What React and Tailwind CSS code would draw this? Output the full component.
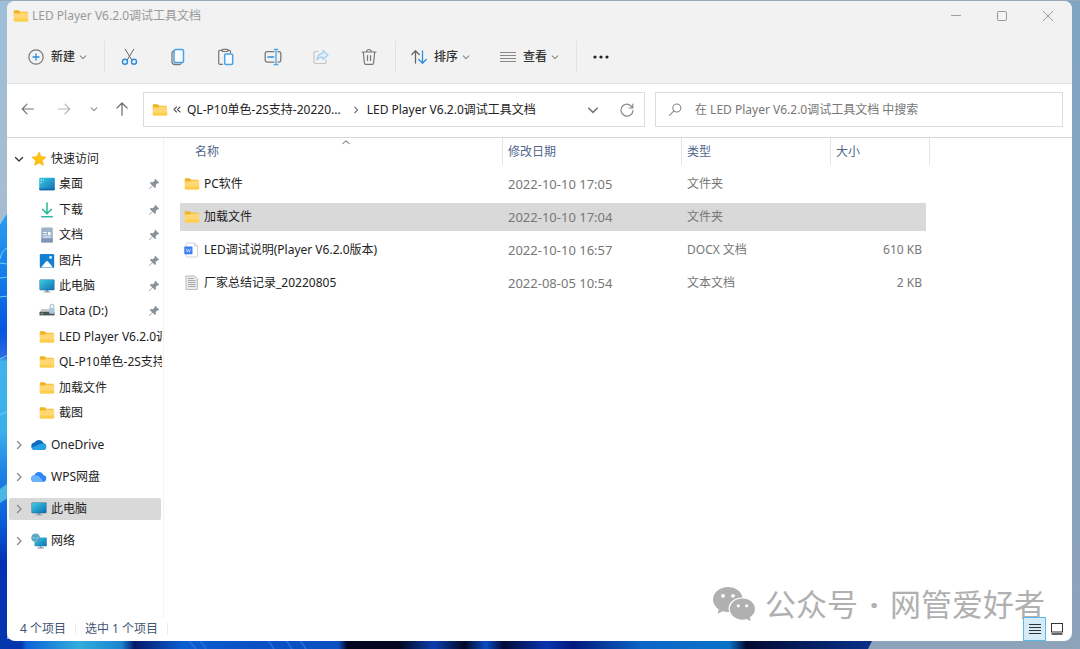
import React from "react";

const stroke = { fill: "none", strokeLinecap: "round", strokeLinejoin: "round" };

function Folder() {
  return (
    <svg viewBox="0 0 16 16" className="h-4 w-4 shrink-0">
      <path d="M.8 3a.8.8 0 0 1 .8-.8h4l1.6 1.6H14a.8.8 0 0 1 .8.8V8H.8Z" fill="#f0b323" />
      <path d="M.8 5.600h5.400l1.200-1.100H14.400a.8.8 0 0 1 .8.8v7.500a.8.8 0 0 1-.8.8H1.600a.8.8 0 0 1-.8-.8Z" fill="#ffd873" />
      <path d="M.8 10.500h14.400v2.300a.8.8 0 0 1-.8.8H1.600a.8.8 0 0 1-.8-.8Z" fill="#fdcd4c" />
    </svg>
  );
}

function Chevron({ dir = "down", className }) {
  const d = { down: "M1.500 3.500 5 7 8.500 3.500", right: "M3.500 1.500 7 5 3.500 8.500", up: "M1 7 5 3.500 9 7" }[dir];
  return (
    <svg viewBox="0 0 10 10" className={className} {...stroke} stroke="currentColor" strokeWidth="1.300">
      <path d={d} />
    </svg>
  );
}

function Monitor() {
  return (
    <svg viewBox="0 0 16 16" className="h-4 w-4 shrink-0">
      <defs>
        <linearGradient id="mon" x1="0" y1="0" x2="1" y2="1">
          <stop offset="0" stopColor="#3ccbe0" />
          <stop offset="1" stopColor="#0f6fb4" />
        </linearGradient>
      </defs>
      <path d="M6.500 11.500h3V14h-3z" fill="#8b98a2" />
      <path d="M4.500 13.500h7v1h-7z" fill="#9aa5ad" />
      <rect x=".5" y="1.500" width="15" height="10.800" rx=".8" fill="#1e6b94" />
      <rect x="1" y="2" width="14" height="9.800" rx=".4" fill="url(#mon)" />
    </svg>
  );
}

function Star() {
  return (
    <svg viewBox="0 0 16 16" className="h-4 w-4 shrink-0">
      <path
        d="M8 1.200 10 5.700l4.900.5-3.700 3.300 1.100 4.800L8 11.800l-4.300 2.500 1.100-4.800L1.100 6.200 6 5.700Z"
        fill="#ffc20e"
        stroke="#f9b406"
        strokeWidth=".8"
        strokeLinejoin="round"
      />
    </svg>
  );
}

function Desktop() {
  return (
    <svg viewBox="0 0 16 16" className="h-4 w-4 shrink-0">
      <rect x=".2" y="1.800" width="15.600" height="12.400" rx="1" fill="url(#mon)" />
      <path d="M1.600 3.500h1.200v1.200H1.600zM1.600 6h1.200v1.200H1.600zM4 3.500h1v1.200H4z" fill="#b8f0f6" />
      <path d="M.2 12.800h15.600v.5a1 1 0 0 1-1 1H1.200a1 1 0 0 1-1-1Z" fill="#1565a8" />
    </svg>
  );
}

function Download() {
  return (
    <svg viewBox="0 0 16 16" className="h-4 w-4 shrink-0" {...stroke} strokeWidth="1.500">
      <path d="M8 .9v10.300M3.500 7.200 8 11.600l4.500-4.400" stroke="#2bb894" />
      <path d="M2.600 14.800h10.800" stroke="#33b7a0" />
    </svg>
  );
}

function Documents() {
  return (
    <svg viewBox="0 0 16 16" className="h-4 w-4 shrink-0">
      <rect x="2.200" y=".6" width="11.600" height="15" rx="1.200" fill="#9db3ca" />
      <path d="M2.200 11.500h11.600v2.900a1.200 1.200 0 0 1-1.200 1.200H3.400a1.200 1.200 0 0 1-1.200-1.200Z" fill="#7d97b5" />
      <path d="M4.300 5h3.500v1H4.300zM4.300 7.200h3.500v1H4.300zM4.300 9.400h7.400v1H4.300zM9 5h2.700v3.200H9z" fill="#f1f6fb" />
    </svg>
  );
}

function Pictures() {
  return (
    <svg viewBox="0 0 16 16" className="h-4 w-4 shrink-0">
      <rect x=".8" y="1" width="14.400" height="14" rx="1.200" fill="#1381d3" />
      <path d="m2 14.500 4.800-5.700a1.600 1.600 0 0 1 2.400 0l4.800 5.700Z" fill="#fff" />
      <circle cx="11.600" cy="4.400" r="1.300" fill="#fff" />
    </svg>
  );
}

function Drive() {
  return (
    <svg viewBox="0 0 16 16" className="h-4 w-4 shrink-0">
      <path d="M2.500 6h10l3 3.600H.5Z" fill="#c4cacf" />
      <path d="M.5 8.800h15v3.600H.5z" fill="#4a5258" />
      <path d="M2 10.200h2.200v1H2z" fill="#5fd37a" />
      <path d="M11.200 5V3a1.800 1.800 0 0 1 3.600 0v1.500" fill="none" stroke="#9fb4c4" strokeWidth="1" />
      <rect x="10.200" y="4.700" width="5.400" height="6" rx=".6" fill="#a9c9de" />
    </svg>
  );
}

function OneDrive() {
  return (
    <svg viewBox="0 0 16 16" className="h-4 w-4 shrink-0">
      <path d="M3.800 13A3.800 3.800 0 0 1 3.300 5.500 5.200 5.200 0 0 1 12.600 6.200 3.500 3.500 0 0 1 12.800 13Z" fill="#0f6cbd" />
      <path d="M.4 10.800 8.200 7.200l4.200-1A3.500 3.500 0 0 1 12.700 13H3.800A3.700 3.700 0 0 1 .4 10.800Z" fill="#23a3e6" />
    </svg>
  );
}

function WpsCloud() {
  return (
    <svg viewBox="0 0 16 16" className="h-4 w-4 shrink-0">
      <path d="M3.600 12.900A3.300 3.300 0 0 1 3.400 6.300 4.700 4.700 0 0 1 12.300 6 3.500 3.500 0 0 1 12.400 12.900Z" fill="#2f86f6" />
      <path d="M3.700 12.900A3.300 3.300 0 0 1 3.900 6.300c1.700 0 3 1.100 4 2.500l3 4.100Z" fill="#69b2ff" />
      <path d="M6.300 7.100c1 .3 4.200 3.400 5 5.800" fill="none" stroke="#cfe6ff" strokeWidth=".7" />
    </svg>
  );
}

function Network() {
  return (
    <svg viewBox="0 0 16 16" className="h-4 w-4 shrink-0">
      <rect x="3.500" y="4.500" width="12.300" height="8.800" rx=".7" fill="url(#mon)" />
      <path d="M8.500 13.300h2.400v1.400H8.500zM6.500 14.500H13v.9H6.500z" fill="#8b98a2" />
      <circle cx="4.600" cy="4.800" r="4.300" fill="#4a9cc0" />
      <path d="M.6 4.800h8M4.600.6c-2.400 2.500-2.400 6 0 8.400M4.600.6C7 3.100 7 6.600 4.600 9" fill="none" stroke="#a9d8ea" strokeWidth=".6" />
    </svg>
  );
}

function Pin() {
  return (
    <svg viewBox="0 0 12 12" className="h-3 w-3 shrink-0">
      <path d="M7.300.8 11.200 4.700l-.9.700-.8-.1-1.700 1.800.1 2.200-.9.800L4.600 7.800 1.500 10.900.9 11.100l.2-.6 3.100-3.100L1.900 5l.8-.9 2.200.1 1.800-1.700-.1-.8Z" fill="#87929b" />
    </svg>
  );
}

function DocxFile() {
  return (
    <svg viewBox="0 0 16 16" className="h-4 w-4 shrink-0">
      <path d="M3 1h7.500L13.700 4v10.200a.8.8 0 0 1-.8.8H3a.8.8 0 0 1-.8-.8V1.800A.8.8 0 0 1 3 1Z" fill="#fff" stroke="#c9cdd2" strokeWidth=".9" />
      <path d="M10.500 1v3h3.200" fill="#e8eaed" stroke="#c9cdd2" strokeWidth=".8" />
      <rect x=".3" y="4.600" width="8.200" height="7.600" rx=".6" fill="#3b7cf0" />
      <path d="m2.200 6.600 1.100 3.600 1.100-3 1.100 3 1.100-3.600" fill="none" stroke="#d3e2ff" strokeWidth=".8" />
    </svg>
  );
}

function TextFile() {
  return (
    <svg viewBox="0 0 16 16" className="h-4 w-4 shrink-0">
      <path d="M2 1h8.800L13.400 3.600V14.500H2Z" fill="#ececeb" stroke="#b5b5b5" strokeWidth=".9" />
      <path d="M4 3.500h6M4 5.500h7.600M4 7.500h7.600M4 9.500h7.600M4 11.500h7.600" stroke="#999" strokeWidth=".8" />
    </svg>
  );
}

const quick = [
  ["桌面", Desktop, true],
  ["下载", Download, true],
  ["文档", Documents, true],
  ["图片", Pictures, true],
  ["此电脑", Monitor, true],
  ["Data (D:)", Drive, true],
  ["LED Player V6.2.0调试工具文档", Folder, false],
  ["QL-P10单色-2S支持-20220805", Folder, false],
  ["加载文件", Folder, false],
  ["截图", Folder, false],
];

const roots = [
  ["OneDrive", OneDrive, false],
  ["WPS网盘", WpsCloud, false],
  ["此电脑", Monitor, true],
  ["网络", Network, false],
];

const files = [
  ["PC软件", Folder, "2022-10-10 17:05", "文件夹", "", false],
  ["加载文件", Folder, "2022-10-10 17:04", "文件夹", "", true],
  ["LED调试说明(Player V6.2.0版本)", DocxFile, "2022-10-10 16:57", "DOCX 文档", "610 KB", false],
  ["厂家总结记录_20220805", TextFile, "2022-08-05 10:54", "文本文档", "2 KB", false],
];

function Wallpaper() {
  return (
    <svg viewBox="0 0 1080 649" preserveAspectRatio="none" className="absolute inset-0 h-full w-full" aria-hidden="true">
      <defs>
        <linearGradient id="sky" x1="0" y1="0" x2="0" y2="1">
          <stop offset="0" stopColor="#9dbfd8" />
          <stop offset=".35" stopColor="#a9bccf" />
          <stop offset="1" stopColor="#9db0c6" />
        </linearGradient>
        <linearGradient id="skyr" x1="0" y1="0" x2="0" y2="1">
          <stop offset="0" stopColor="#7fa5c3" />
          <stop offset="1" stopColor="#8ca3ba" />
        </linearGradient>
        <linearGradient id="left" x1="0" y1="0" x2="0" y2="1">
          <stop offset="0" stopColor="#2d9cf0" />
          <stop offset=".13" stopColor="#1581ea" />
          <stop offset=".27" stopColor="#0355e0" />
          <stop offset=".33" stopColor="#2a6be0" />
          <stop offset=".34" stopColor="#3fb4ea" />
          <stop offset=".5" stopColor="#3ab0ea" />
          <stop offset=".6" stopColor="#1c80e6" />
          <stop offset=".7" stopColor="#0a62da" />
          <stop offset=".8" stopColor="#0232b4" />
          <stop offset="1" stopColor="#0436ae" />
        </linearGradient>
        <linearGradient id="base" x1="0" y1="0" x2="868" y2="0" gradientUnits="userSpaceOnUse">
          <stop offset="0" stopColor="#0436ae" />
          <stop offset=".025" stopColor="#0436ae" />
          <stop offset=".03" stopColor="#0c62d8" />
          <stop offset=".09" stopColor="#32aedc" />
          <stop offset=".14" stopColor="#1d84d0" />
          <stop offset=".155" stopColor="#04186a" />
          <stop offset=".21" stopColor="#0a5fd0" />
          <stop offset=".3" stopColor="#0a4fc4" />
          <stop offset=".39" stopColor="#0b50c0" />
          <stop offset=".4" stopColor="#020620" />
          <stop offset=".46" stopColor="#020620" />
          <stop offset=".5" stopColor="#0a3fae" />
          <stop offset=".535" stopColor="#030824" />
          <stop offset=".56" stopColor="#0a4cc4" />
          <stop offset=".58" stopColor="#030a38" />
          <stop offset=".63" stopColor="#0836b0" />
          <stop offset=".66" stopColor="#04187c" />
          <stop offset=".74" stopColor="#0b66c6" />
          <stop offset=".84" stopColor="#0a72c8" />
          <stop offset=".86" stopColor="#020a30" />
          <stop offset=".95" stopColor="#06226c" />
          <stop offset="1" stopColor="#0a2f86" />
        </linearGradient>
      </defs>
      <rect width="540" height="649" fill="url(#sky)" />
      <rect x="540" width="540" height="649" fill="url(#skyr)" />
      <rect width="1080" height="1" fill="#98a8b8" />
      <path d="M0 224 7 213V649H0Z" fill="url(#left)" />
      <path d="M0 224 7 213M0 259Q2 250 7 248M0 263 7 264M0 278 8 277M0 297 8 296M0 359 8 355M0 415 8 411" fill="none" stroke="#6fd0fa" strokeWidth="1" />
      <path d="M0 489 8 483V498L0 503Z" fill="#4ab6e4" />
      <path d="M0 639H873L868 649H0Z" fill="url(#base)" />
      <path d="M188 640 196 649M200 640 206 649M268 640 274 649M286 640 292 649M300 640 306 649" stroke="#2368d8" strokeWidth="2" />
    </svg>
  );
}

function TitleBar() {
  const btn = "flex h-full w-[46px] items-center justify-center";
  return (
    <header className="flex h-[30px] items-center pr-px pl-1.5 text-[#999]">
      <Folder />
      <h1 className="ml-[3px] flex-1 whitespace-nowrap">LED Player V6.2.0调试工具文档</h1>
      <button aria-label="最小化" className={btn}>
        <svg viewBox="0 0 12 12" className="h-3 w-3" stroke="#a0a0a0"><path d="M1 5.500h10" /></svg>
      </button>
      <button aria-label="最大化" className={btn}>
        <svg viewBox="0 0 12 12" className="h-3 w-3" fill="none" stroke="#999"><rect x="1.500" y="1.500" width="9" height="9" rx=".8" /></svg>
      </button>
      <button aria-label="关闭" className={btn}>
        <svg viewBox="0 0 12 12" className="h-3 w-3" stroke="#999"><path d="m1 1 10 10M11 1 1 11" /></svg>
      </button>
    </header>
  );
}

const tools = [
  ["剪切", (
    <>
      <path d="M5.200 1.200 11.800 12M13.800 1.200 7.200 12" stroke="#666" />
      <circle cx="5" cy="13.700" r="2.500" stroke="#2a8de0" strokeWidth="1.400" />
      <circle cx="14" cy="13.700" r="2.500" stroke="#2a8de0" strokeWidth="1.400" />
    </>
  )],
  ["复制", (
    <>
      <path d="M5.500 3.200A2 2 0 0 0 4 5v8.500A3 3 0 0 0 7 16.500h4.500a2 2 0 0 0 1.700-1" stroke="#7a7a7a" strokeWidth="1.300" />
      <rect x="6" y="1.500" width="9.500" height="13" rx="1.800" stroke="#4aa3e6" strokeWidth="1.500" fill="#f7fbff" />
    </>
  )],
  ["粘贴", (
    <>
      <path d="M6.500 2.300H4a1.300 1.300 0 0 0-1.300 1.300V15A1.300 1.300 0 0 0 4 16.300h2.500M12 2.300h1.200a1.300 1.300 0 0 1 1.300 1.300V4.500" stroke="#777" strokeWidth="1.200" />
      <rect x="6" y="1.300" width="6" height="2.200" rx="1" stroke="#777" strokeWidth="1.200" />
      <rect x="8.700" y="6" width="8" height="10.500" rx="1.200" stroke="#4aa3e6" strokeWidth="1.500" fill="#f7fbff" />
    </>
  )],
  ["重命名", (
    <>
      <path d="M10 3.700H3A1.800 1.800 0 0 0 1.200 5.500v6.800A1.800 1.800 0 0 0 3 14.100h7M14 3.700h1a1.800 1.800 0 0 1 1.800 1.800v6.800A1.800 1.800 0 0 1 15 14.100h-1" stroke="#777" strokeWidth="1.300" />
      <path d="M4 9h5.500" stroke="#2a8de0" strokeWidth="1.600" />
      <path d="M12 1.500v15M10.200 1.300h3.600M10.200 16.700h3.600" stroke="#4aa3e6" strokeWidth="1.300" />
    </>
  )],
  ["共享", (
    <>
      <path d="M6 3.500H3.500A1.500 1.500 0 0 0 2 5v9a1.500 1.500 0 0 0 1.500 1.500h9A1.500 1.500 0 0 0 14 14v-2" stroke="#c4c4c4" strokeWidth="1.200" />
      <path d="M11 2.500 16 7l-5 4.500V9.200C8 9 6.300 10 5 12c.2-4 2.200-6.400 6-6.900Z" stroke="#a5cdee" strokeWidth="1.200" fill="#e3effa" />
    </>
  )],
  ["删除", (
    <>
      <path d="M2 4h14M3.300 4l1.100 11a1.500 1.500 0 0 0 1.500 1.400h6.200a1.500 1.500 0 0 0 1.500-1.400L14.700 4M6.700 3.800a2.300 2.300 0 0 1 4.600 0M7.500 7.500v5M10.500 7.500v5" stroke="#777" strokeWidth="1.200" />
    </>
  )],
];

function Toolbar() {
  const btn = "flex h-8 items-center px-[15px] font-medium text-[#333]";
  const sep = "ml-0.5 h-8 w-px bg-[#e2e2e2]";
  return (
    <div role="toolbar" className="flex h-[53px] items-center border-b border-[#e3e3e3] pl-1.5">
      <button className={btn}>
        <svg viewBox="0 0 16 16" className="mr-[7px] h-4 w-4" {...stroke}>
          <circle cx="8" cy="8" r="7.200" stroke="#777" strokeWidth="1.200" />
          <path d="M8 5v6M5 8h6" stroke="#2a8de0" strokeWidth="1.300" />
        </svg>
        新建
        <Chevron className="ml-1 h-2 w-2 text-[#888]" />
      </button>
      <span className={sep} />
      {tools.map(([label, art]) => (
        <button key={label} aria-label={label} className="flex h-8 w-12 items-center justify-center">
          <svg viewBox="0 0 18 18" className="h-[18px] w-[18px]" {...stroke}>{art}</svg>
        </button>
      ))}
      <span className={sep} />
      <button className={btn}>
        <svg viewBox="0 0 16 16" className="mr-[7px] h-4 w-4" {...stroke} strokeWidth="1.300">
          <path d="M4.500 14V2M.8 5.500 4.500 1.800l3.700 3.700" stroke="#666" />
          <path d="M11.500 2v12M7.800 10.500l3.700 3.700 3.700-3.700" stroke="#2a8de0" />
        </svg>
        排序
        <Chevron className="ml-1 h-2 w-2 text-[#888]" />
      </button>
      <button className={btn}>
        <svg viewBox="0 0 16 16" className="mr-[7px] h-4 w-4" stroke="#8a8a8a">
          <path d="M0 3.500h16M0 6.500h16M0 9.500h16M0 12.500h16" />
        </svg>
        查看
        <Chevron className="ml-1 h-2 w-2 text-[#888]" />
      </button>
      <span className={sep} />
      <button aria-label="更多" className="flex h-8 w-12 items-center justify-center">
        <svg viewBox="0 0 18 4" className="h-1 w-[18px]" fill="#222">
          <circle cx="3" cy="2" r="1.600" />
          <circle cx="9" cy="2" r="1.600" />
          <circle cx="15" cy="2" r="1.600" />
        </svg>
      </button>
    </div>
  );
}

function AddressRow() {
  const nav = "flex h-[34px] shrink-0 items-center justify-center";
  return (
    <div className="flex h-[54px] items-start border-b border-[#d6d6d6] pt-2 pr-[9px] pl-0.5">
      <button aria-label="后退" className={`${nav} w-[37px] text-[#777]`}>
        <svg viewBox="0 0 14 14" className="h-3.5 w-3.5" {...stroke} stroke="currentColor" strokeWidth="1.200"><path d="M12.500 7h-11M6 2.200 1.300 7 6 11.800" /></svg>
      </button>
      <button aria-label="前进" className={`${nav} w-[37px] text-[#b5b5b5]`}>
        <svg viewBox="0 0 14 14" className="h-3.5 w-3.5" {...stroke} stroke="currentColor" strokeWidth="1.200"><path d="M.5 7h11M7 2.200 11.700 7 7 11.800" /></svg>
      </button>
      <button aria-label="最近的位置" className={`${nav} w-[21px] text-[#888]`}>
        <Chevron className="h-2 w-2" />
      </button>
      <button aria-label="上移" className={`${nav} mr-[3px] w-9 text-[#666]`}>
        <svg viewBox="0 0 14 14" className="h-3.5 w-3.5" {...stroke} stroke="currentColor" strokeWidth="1.200"><path d="M7 13.200V1M1.800 6.200 7 1l5.200 5.200" /></svg>
      </button>
      <nav aria-label="地址" className="flex h-[35px] min-w-0 flex-1 items-center border border-[#dcdcdc] pl-2 whitespace-nowrap text-[#222]">
        <Folder />
        <svg viewBox="0 0 8 8" className="mr-1.5 ml-[5px] h-2 w-2 shrink-0" {...stroke} stroke="#555" strokeWidth="1.100">
          <path d="M3.500 1 1 3.500 3.500 6M7 1 4.500 3.500 7 6" />
        </svg>
        <a href="#parent">QL-P10单色-2S支持-20220...</a>
        <Chevron dir="right" className="mr-[7px] ml-[11px] h-2 w-2 shrink-0 text-[#555]" />
        <a href="#current" className="min-w-0 flex-1 overflow-hidden">LED Player V6.2.0调试工具文档</a>
        <button aria-label="历史记录" className="flex h-full w-[34px] items-center justify-center text-[#777]">
          <Chevron className="h-3 w-3" />
        </button>
        <button aria-label="刷新" className="flex h-full w-[34px] items-center justify-center">
          <svg viewBox="0 0 14 14" className="h-3.5 w-3.5" {...stroke} stroke="#888" strokeWidth="1.200"><path d="M12.600 5A6 6 0 1 0 13 7.500M12.800 1.200V5H9" /></svg>
        </button>
      </nav>
      <label className="ml-2.5 flex h-[35px] w-[408px] items-center border border-[#dcdcdc] pl-3">
        <svg viewBox="0 0 14 14" className="h-3.5 w-3.5 shrink-0" {...stroke} stroke="#888" strokeWidth="1.100">
          <circle cx="8.800" cy="5" r="4" />
          <path d="M5.900 7.900 1.500 12.300" />
        </svg>
        <input
          type="search"
          aria-label="搜索"
          placeholder="在 LED Player V6.2.0调试工具文档 中搜索"
          className="ml-[13px] min-w-0 flex-1 bg-transparent outline-none placeholder:text-[#777]"
        />
      </label>
    </div>
  );
}

function Sidebar() {
  return (
    <aside className="w-[157px] shrink-0 border-r border-[#f3f3f3] pt-2 pr-px text-[#222]">
      <ul className="grid h-[280px] auto-rows-fr grid-cols-1">
        <li>
          <a href="#quick" className="flex h-full items-center pl-[7px]">
            <Chevron className="mr-[7px] h-2.5 w-2.5 text-[#333]" />
            <Star />
            <span className="ml-1">快速访问</span>
          </a>
        </li>
        {quick.map(([name, Icon, pinned], i) => (
          <li key={i} className="min-w-0">
            <a href="#item" className="flex h-full items-center pl-8">
              <Icon />
              <span className="ml-1 min-w-0 flex-1 overflow-hidden whitespace-nowrap">{name}</span>
              {pinned && <span className="pr-[2px]"><Pin /></span>}
            </a>
          </li>
        ))}
      </ul>
      <ul className="mt-2 flex flex-col gap-2.5">
        {roots.map(([name, Icon, selected], i) => (
          <li key={i} className="pr-px pl-0.5">
            <a href="#root" className={`flex h-[22px] items-center rounded-xs pl-[5px] ${selected ? "bg-[#d9d9d9]" : ""}`}>
              <Chevron dir="right" className="mr-[7px] h-2.5 w-2.5 text-[#888]" />
              <Icon />
              <span className="ml-1">{name}</span>
            </a>
          </li>
        ))}
      </ul>
    </aside>
  );
}

function FileTable() {
  const th = "h-[29px] p-0 text-left align-top font-normal";
  const head = "flex h-[27px] items-center border-r border-[#e4e4e4] pl-[5px]";
  const cell = "h-[33px] border-t-[3px] border-b-2 border-transparent bg-clip-padding p-0 whitespace-nowrap";
  return (
    <table className="w-[750px] table-fixed border-separate border-spacing-0">
      <colgroup>
        <col className="w-[323px]" />
        <col className="w-[179px]" />
        <col className="w-[149px]" />
        <col className="w-[99px]" />
      </colgroup>
      <thead className="text-[#52688a]">
        <tr>
          <th className={th}>
            <div className={`${head} relative ml-2.5`}>
              名称
              <Chevron dir="up" className="absolute top-0 left-1/2 h-2 w-2 -translate-x-1/2 text-[#888]" />
            </div>
          </th>
          <th className={th}><div className={head}>修改日期</div></th>
          <th className={th}><div className={head}>类型</div></th>
          <th className={th}><div className={head}>大小</div></th>
        </tr>
      </thead>
      <tbody className="text-[#777]">
        {files.map(([name, Icon, date, type, size, selected]) => {
          const bg = selected ? "bg-[#d9d9d9]" : "";
          return (
            <tr key={name}>
              <td className={`${cell} ${bg} rounded-l-xs text-[#222]`}>
                <div className="flex items-center pl-1">
                  <Icon />
                  <span className="ml-1">{name}</span>
                </div>
              </td>
              <td className={`${cell} ${bg} pl-[5px] text-[13px] leading-4`}>{date}</td>
              <td className={`${cell} ${bg} pl-[5px]`}>{type}</td>
              <td className={`${cell} ${bg} border-r-4 pr-1 text-right`}>{size}</td>
            </tr>
          );
        })}
      </tbody>
    </table>
  );
}

function Watermark() {
  return (
    <div className="pointer-events-none absolute right-[27px] bottom-5 flex items-center text-[31px] whitespace-nowrap text-[#b0b0b0]">
      <svg viewBox="0 0 42 34" className="mr-2.5 h-[34px] w-[42px]">
        <path d="M15 0C6.700 0 0 5.600 0 12.600c0 4 2.200 7.500 5.700 9.800L4.500 26.800l5.200-2.600c1.700.5 3.500.8 5.300.8h1.200c-2.600-8.400 4-14.600 13.300-14.600C28.500 4.400 22.300 0 15 0Z" fill="#b0b0b0" />
        <path d="M29.500 11.500c-7 0-12.700 4.700-12.700 10.600s5.700 10.600 12.700 10.600c1.500 0 2.900-.2 4.200-.6l4.100 2-1-3.700c3.200-2 5.200-5 5.200-8.300 0-5.900-5.500-10.600-12.500-10.600Z" fill="#b0b0b0" />
        <circle cx="10" cy="8.800" r="1.900" fill="#fff" />
        <circle cx="20" cy="8.800" r="1.900" fill="#fff" />
        <circle cx="25.300" cy="18.800" r="1.600" fill="#fff" />
        <circle cx="33.700" cy="18.800" r="1.600" fill="#fff" />
      </svg>
      <span>公众号</span>
      <span className="w-8 text-center font-bold">·</span>
      <span>网管爱好者</span>
    </div>
  );
}

function StatusBar() {
  return (
    <footer className="relative flex h-6 items-center pl-[13px] text-[#3f5573]">
      <span>4 个项目</span>
      <span className="mx-[9px] h-3 w-px bg-[#ebebeb]" />
      <span>选中 1 个项目</span>
      <span className="mx-[9px] h-3 w-px bg-[#ebebeb]" />
      <button aria-label="详细信息" className="ml-auto flex h-6 w-[23px] items-center justify-center border border-[#5cb8e4] bg-[#d5ebf7]">
        <svg viewBox="0 0 12 12" className="h-3 w-3" stroke="#333"><path d="M0 1.500h12M0 4.500h12M0 7.500h12M0 10.500h12" /></svg>
      </button>
      <button aria-label="大缩略图" className="mr-1 flex h-6 w-[22px] items-center justify-center">
        <svg viewBox="0 0 12 12" className="h-3 w-3" fill="none" stroke="#333"><rect x=".5" y=".5" width="11" height="8.500" /><path d="M.5 11h11" strokeWidth="1.400" /></svg>
      </button>
    </footer>
  );
}

export default function App() {
  return (
    <div className="relative flex min-h-screen flex-col bg-[#8ea3bc] pt-px pr-2 pb-2 pl-[7px] font-['Noto_Sans','Noto_Sans_CJK_SC',sans-serif] text-[12px] leading-[18px]">
      <Wallpaper />
      <div className="relative flex flex-1 flex-col overflow-hidden rounded-lg bg-white">
        <div className="bg-[#f2f2f2]">
          <TitleBar />
          <Toolbar />
        </div>
        <AddressRow />
        <div className="flex flex-1">
          <Sidebar />
          <main className="min-w-0 flex-1 pl-4">
            <FileTable />
          </main>
        </div>
        <Watermark />
        <StatusBar />
      </div>
    </div>
  );
}
